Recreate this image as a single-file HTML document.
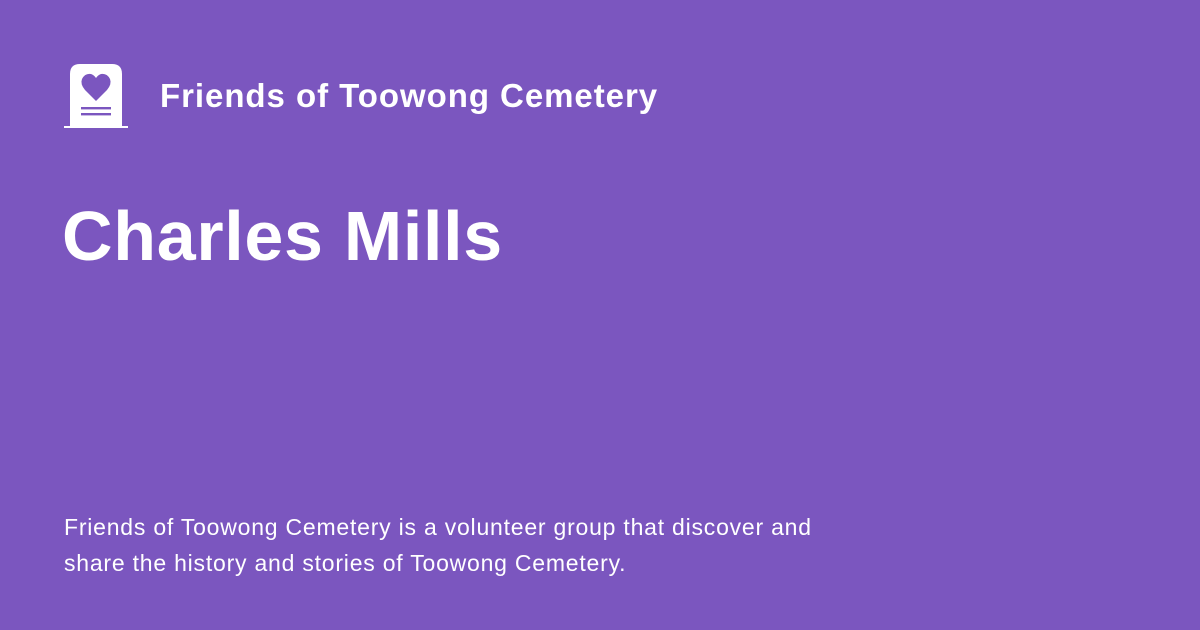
<!DOCTYPE html>
<html><head><style>
body{margin:0;width:1200px;height:630px;background:#7b56bf;font-family:"Liberation Sans",sans-serif;color:#fff;position:relative;overflow:hidden}
.t{position:absolute;left:160px;top:77px;font-size:33px;font-weight:bold;letter-spacing:0.95px}
h1{position:absolute;left:62px;top:196px;margin:0;font-size:70px;font-weight:bold;letter-spacing:0.7px}
p{position:absolute;left:64px;top:509px;margin:0;font-size:23px;line-height:36px;width:800px;letter-spacing:0.78px}
</style></head><body>
<svg style="position:absolute;left:0;top:0" width="200" height="140">
<path d="M70 126 V74 Q70 64 80 64 H112 Q122 64 122 74 V126 Z" fill="#fff"/>
<rect x="64" y="126" width="64" height="2" fill="#fff"/>
<path d="M96 101 L85 90 Q80 84 82 79 Q85 73 91 74 Q94 75 96 78 Q98 75 101 74 Q107 73 110 79 Q112 84 107 90 Z" fill="#7b56bf"/>
<rect x="81" y="107" width="30" height="2.4" fill="#7b56bf"/>
<rect x="81" y="113" width="30" height="2.4" fill="#7b56bf"/>
</svg>
<div class="t">Friends of Toowong Cemetery</div>
<h1>Charles Mills</h1>
<p>Friends of Toowong Cemetery is a volunteer group that discover and share the history and stories of Toowong Cemetery.</p>
</body></html>
